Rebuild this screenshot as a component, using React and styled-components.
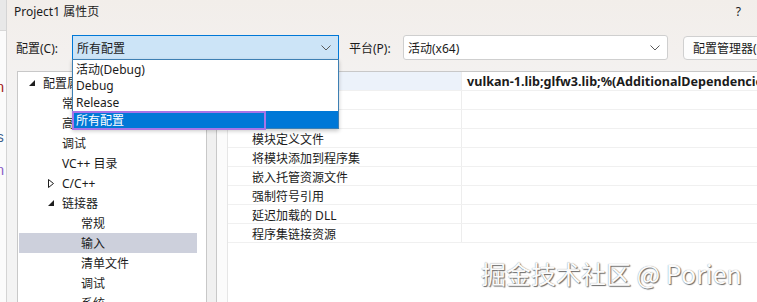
import React from 'react';
import styled, { createGlobalStyle } from 'styled-components';

const GlobalStyle = createGlobalStyle`
  html, body {
    margin: 0;
    padding: 0;
    background: #f3f3f3;
  }
  body {
    font-family: "Noto Sans", "Noto Sans CJK SC", sans-serif;
    font-size: 12px;
    color: #1b1b1b;
  }
`;

const Screen = styled.div`
  position: relative;
  display: flex;
  width: 757px;
  height: 302px;
  overflow: hidden;
`;

const EditorEdge = styled.div`
  flex: none;
  width: 6px;
  display: flex;
  flex-direction: column;
  overflow: hidden;
  background: #fbfbfb;
`;

const EditorTab = styled.div`
  flex: none;
  height: 30px;
  background: #e8e8e8;
  border-bottom: 1px solid #d8d8d8;
`;

const CodeGlyph = styled.div`
  margin-top: ${p => p.$gap}px;
  margin-left: -4px;
  font-family: "Liberation Mono", monospace;
  font-size: 14px;
  line-height: 14px;
  color: ${p => p.$color};
`;

const Dialog = styled.div`
  position: relative;
  flex: 1;
  min-width: 0;
  display: flex;
  flex-direction: column;
  border-left: 1px solid #d4d4d4;
  background: linear-gradient(180deg, #f2eeea 0px, #f3f0ee 50px, #f3f3f3 110px);
`;

const TitleBar = styled.div`
  flex: none;
  height: 22px;
  display: flex;
  align-items: center;
  justify-content: space-between;
  padding: 0 16px 0 7px;
  font-size: 12px;
`;

const HelpMark = styled.span`
  font-size: 12px;
`;

const ConfigRow = styled.div`
  flex: none;
  display: flex;
  align-items: center;
  height: 25px;
  margin-top: 13px;
  padding-left: 9px;
`;

const FieldLabel = styled.span`
  flex: none;
  width: ${p => p.$w}px;
  margin-left: ${p => p.$gap || 0}px;
`;

const Combo = styled.div`
  flex: none;
  box-sizing: border-box;
  width: ${p => p.$w}px;
  height: 25px;
  display: flex;
  align-items: center;
  justify-content: space-between;
  padding: 0 7px 0 4px;
  background: ${p => (p.$focused ? '#cce4f7' : '#ffffff')};
  border: 1px solid ${p => (p.$focused ? '#0078d7' : '#cfcfcf')};
  border-radius: ${p => (p.$focused ? '0' : '3px')};
`;

const ManagerButton = styled.div`
  flex: none;
  box-sizing: border-box;
  width: 110px;
  height: 24px;
  margin-left: 15px;
  display: flex;
  align-items: center;
  padding-left: 9px;
  white-space: nowrap;
  background: #fdfdfd;
  border: 1px solid #d0d0d0;
  border-radius: 4px;
`;

const Body = styled.div`
  flex: 1;
  display: flex;
  margin-top: 11px;
  padding-left: 10px;
  min-height: 0;
`;

const TreePanel = styled.div`
  flex: none;
  width: 188px;
  padding-top: 1px;
  background: #ffffff;
  border: 1px solid #c8c8c8;
  border-bottom: none;
`;

const TreeRow = styled.div`
  display: flex;
  align-items: center;
  height: 20px;
  margin: 0 9px 0 1px;
  padding-left: ${p => 5 + p.$level * 19}px;
  background: ${p => (p.$selected ? '#cdd0dc' : 'transparent')};
  white-space: nowrap;
`;

const Expander = styled.span`
  flex: none;
  width: 19px;
  display: flex;
  align-items: center;
  padding-left: 5px;
  box-sizing: border-box;
`;

const Splitter = styled.div`
  flex: none;
  width: 9px;
  background: #f0f0f0;
`;

const Grid = styled.div`
  flex: 1;
  display: flex;
  background: #ffffff;
  border-top: 1px solid #c8c8c8;
  border-left: 1px solid #c8c8c8;
`;

const Gutter = styled.div`
  flex: none;
  width: 10px;
  background: #fbfbfb;
  border-right: 1px solid #e6e6e6;
`;

const Table = styled.div`
  flex: 1;
  display: flex;
  flex-direction: column;
  min-width: 0;
`;

const PropRow = styled.div`
  flex: none;
  display: flex;
  height: 19px;
  border-bottom: 1px solid #f0f0f0;
  box-sizing: border-box;
`;

const NameCell = styled.div`
  flex: none;
  width: 234px;
  display: flex;
  align-items: center;
  padding: 1px 0 0 24px;
  box-sizing: border-box;
  background: ${p => (p.$active ? '#ecf2fa' : 'transparent')};
  border-right: 1px solid #ededed;
  white-space: nowrap;
`;

const ValueCell = styled.div`
  flex: 1;
  min-width: 0;
  display: flex;
  align-items: center;
  padding-left: 5px;
  font-size: 12.6px;
  font-weight: 700;
  white-space: nowrap;
  overflow: hidden;
`;

const DropList = styled.div`
  position: absolute;
  left: 65px;
  top: 59px;
  width: 267px;
  box-sizing: border-box;
  background: #ffffff;
  border: 1px solid #3d7fb3;
  box-shadow: 0 2px 4px rgba(0, 0, 0, 0.22);
  z-index: 2;
`;

const DropItem = styled.div`
  position: relative;
  height: 17px;
  display: flex;
  align-items: center;
  padding-left: 3px;
  background: ${p => (p.$selected ? '#0078d7' : 'transparent')};
  color: ${p => (p.$selected ? '#ffffff' : '#1b1b1b')};
`;

const FocusRing = styled.span`
  position: absolute;
  left: -1px;
  top: 0;
  bottom: -2px;
  width: 194px;
  box-sizing: border-box;
  border: 2px solid #a874e6;
`;

const Watermark = styled.div`
  position: absolute;
  left: 481px;
  top: 259px;
  font-family: "Noto Sans CJK SC", sans-serif;
  font-size: 25px;
  line-height: 28px;
  color: #fbfbfb;
  text-shadow: 1px 1px 1px #6a6a6a, 0 0 1px #8a8a8a;
  white-space: nowrap;
  z-index: 3;
`;

const Chevron = () => (
  <svg width="10" height="6" viewBox="0 0 10 6">
    <path d="M0.5 0.5 L5 5 L9.5 0.5" fill="none" stroke="#5a5a5a" strokeWidth="1" />
  </svg>
);

const Expanded = () => (
  <svg width="6" height="6" viewBox="0 0 6 6">
    <polygon points="6,0 6,6 0,6" fill="#1e1e1e" />
  </svg>
);

const Collapsed = () => (
  <svg width="6" height="9" viewBox="0 0 6 9">
    <polygon points="0.5,0.5 5.5,4.5 0.5,8.5" fill="none" stroke="#1e1e1e" strokeWidth="1" />
  </svg>
);

const tree = [
  { label: '配置属性', level: 0, open: true },
  { label: '常规', level: 1 },
  { label: '高级', level: 1 },
  { label: '调试', level: 1 },
  { label: 'VC++ 目录', level: 1 },
  { label: 'C/C++', level: 1, open: false },
  { label: '链接器', level: 1, open: true },
  { label: '常规', level: 2 },
  { label: '输入', level: 2, selected: true },
  { label: '清单文件', level: 2 },
  { label: '调试', level: 2 },
  { label: '系统', level: 2 },
];

const props = [
  { name: '附加依赖项', value: 'vulkan-1.lib;glfw3.lib;%(AdditionalDependencies)', active: true },
  { name: '忽略所有默认库', value: '' },
  { name: '忽略特定默认库', value: '' },
  { name: '模块定义文件', value: '' },
  { name: '将模块添加到程序集', value: '' },
  { name: '嵌入托管资源文件', value: '' },
  { name: '强制符号引用', value: '' },
  { name: '延迟加载的 DLL', value: '' },
  { name: '程序集链接资源', value: '' },
];

const configs = ['活动(Debug)', 'Debug', 'Release', '所有配置'];

export default function App() {
  return (
    <>
      <GlobalStyle />
      <Screen>
        <EditorEdge>
          <EditorTab />
          <CodeGlyph $gap={50} $color="#a31515">n</CodeGlyph>
          <CodeGlyph $gap={36} $color="#3b5d8a">s</CodeGlyph>
          <CodeGlyph $gap={19} $color="#8a5cc7">n</CodeGlyph>
        </EditorEdge>
        <Dialog>
          <TitleBar>
            <span>Project1 属性页</span>
            <HelpMark>?</HelpMark>
          </TitleBar>
          <ConfigRow>
            <FieldLabel $w={56}>配置(C):</FieldLabel>
            <Combo $w={267} $focused>
              <span>所有配置</span>
              <Chevron />
            </Combo>
            <FieldLabel $w={54} $gap={10}>平台(P):</FieldLabel>
            <Combo $w={265}>
              <span>活动(x64)</span>
              <Chevron />
            </Combo>
            <ManagerButton>配置管理器(O)...</ManagerButton>
          </ConfigRow>
          <Body>
            <TreePanel>
              {tree.map((t, i) => (
                <TreeRow key={i} $level={t.level} $selected={t.selected}>
                  <Expander>
                    {t.open === true && <Expanded />}
                    {t.open === false && <Collapsed />}
                  </Expander>
                  {t.label}
                </TreeRow>
              ))}
            </TreePanel>
            <Splitter />
            <Grid>
              <Gutter />
              <Table>
                {props.map((p, i) => (
                  <PropRow key={i}>
                    <NameCell $active={p.active}>{p.name}</NameCell>
                    <ValueCell>{p.value}</ValueCell>
                  </PropRow>
                ))}
              </Table>
            </Grid>
          </Body>
          <DropList>
            {configs.map((c, i) => (
              <DropItem key={c} $selected={i === configs.length - 1}>
                {c}
                {i === configs.length - 1 && <FocusRing />}
              </DropItem>
            ))}
          </DropList>
        </Dialog>
        <Watermark>掘金技术社区 @ Porien</Watermark>
      </Screen>
    </>
  );
}
